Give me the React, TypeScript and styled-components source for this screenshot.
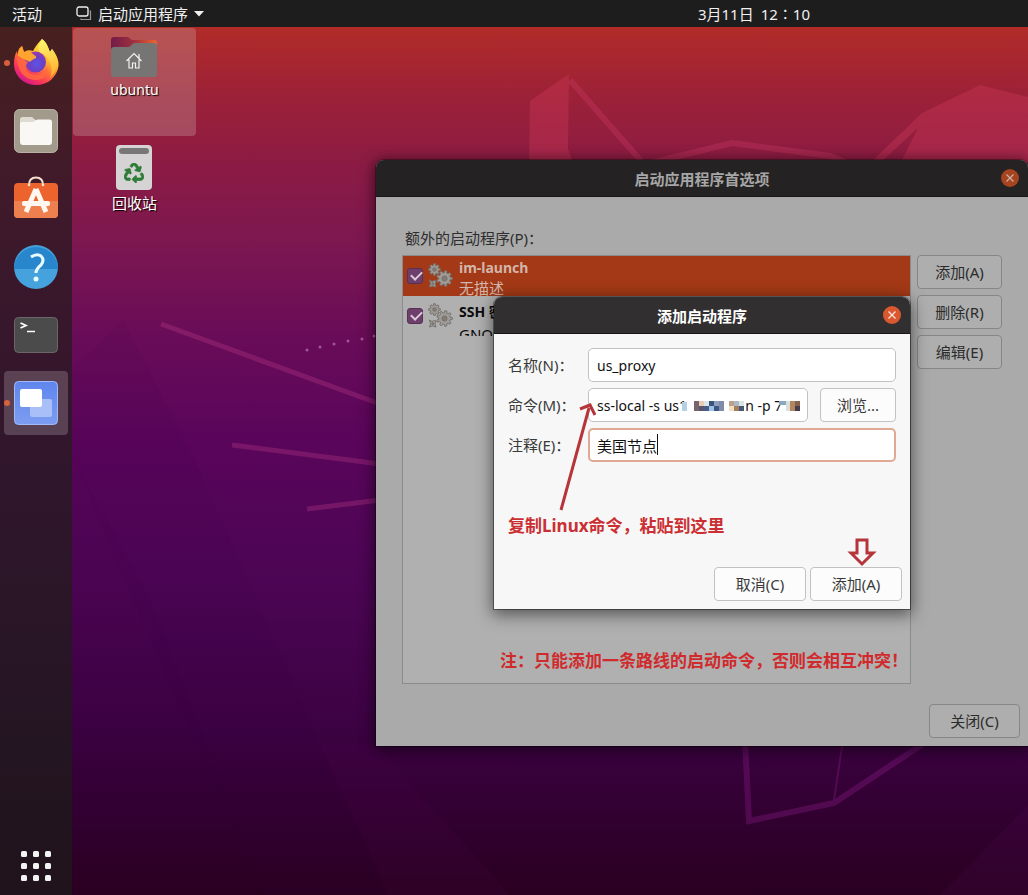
import React from 'react';
import styled, { createGlobalStyle, css } from 'styled-components';
import { FaRecycle } from 'react-icons/fa';

const Global = createGlobalStyle`
  * { box-sizing: border-box; }
  html, body { margin: 0; }
  body, button, input {
    font-family: "Noto Sans", "Noto Sans CJK SC", sans-serif;
    font-size: 15px;
    line-height: 20px;
  }
  h1, h2, p { margin: 0; }
  svg { display: block; }
`;

const Screen = styled.div`
  min-height: 100vh;
  display: grid;
  grid-template-rows: 27px 1fr;
  grid-template-columns: 72px 1fr;
  overflow: hidden;
`;

const TopBar = styled.header`
  grid-column: 1 / -1;
  display: flex;
  align-items: center;
  gap: 24px;
  padding: 0 12px;
  background: #1d1d1d;
  color: #f0f0f0;
  position: relative;
`;

const BarButton = styled.button`
  display: flex;
  align-items: center;
  gap: 6px;
  padding: 0;
  border: 0;
  background: none;
  color: inherit;
`;

const AppMenu = styled(BarButton)`
  margin-left: 10px;
`;

const Clock = styled(BarButton)`
  margin-left: auto;
  margin-right: 206px;
  gap: 7px;
`;

const Dock = styled.nav`
  display: flex;
  flex-direction: column;
  align-items: center;
  gap: 4px;
  padding: 4px 4px 14px;
  background: linear-gradient(#47201f 0, #411a2a 150px, #37172c 300px, #30162c 450px, #241522 720px, #20131b 100%);
`;

const DockItem = styled.button<{ $active?: boolean }>`
  position: relative;
  width: 64px;
  height: 64px;
  display: grid;
  place-items: center;
  padding: 0;
  border: 0;
  border-radius: 4px;
  background: ${p => (p.$active ? 'rgba(255,255,255,0.19)' : 'transparent')};
`;

const RunningDot = styled.span`
  position: absolute;
  left: 0;
  top: 29px;
  width: 6px;
  height: 6px;
  border-radius: 50%;
  background: #d8603c;
`;

const AppsButton = styled.button`
  margin-top: auto;
  padding: 0;
  border: 0;
  background: none;
`;

const Desktop = styled.main`
  position: relative;
  overflow: hidden;
  padding: 1px;
  background: linear-gradient(#b12b28 0, #9c2138 70px, #8b1b44 140px, #7c1750 215px, #690c58 310px, #5a055b 410px, #4b0553 560px, #3c0242 700px, #30002e 800px, #2a0021 100%);
`;

const Wallpaper = styled.svg`
  position: absolute;
  left: 0;
  top: 0;
  width: 956px;
  height: 868px;
`;

const IconColumn = styled.div`
  position: relative;
  width: 123px;
  display: flex;
  flex-direction: column;
  gap: 1px;
`;

const DesktopIcon = styled.button<{ $selected?: boolean }>`
  height: 108px;
  display: flex;
  flex-direction: column;
  align-items: center;
  gap: 2px;
  padding: 8px 0 0;
  border: 0;
  border-radius: 4px;
  background: ${p => (p.$selected ? 'rgba(200,160,160,0.34)' : 'transparent')};
  color: #fff;
  text-shadow: 1px 1px 1px #000;
`;

const LatinName = styled.span`
  font-size: 14px;
`;

const windowFrame = css`
  position: absolute;
  display: flex;
  flex-direction: column;
  border-radius: 8px 8px 0 0;
`;

const PrefsWindow = styled.section`
  ${windowFrame}
  left: 304px;
  right: 0;
  top: 133px;
  background: #aaaaaa;
  color: #2e2e2e;
  box-shadow: 0 2px 14px 2px rgba(0, 0, 0, 0.55), 0 0 0 1px rgba(0, 0, 0, 0.3);
`;

const AddDialog = styled.section`
  ${windowFrame}
  left: 118px;
  width: 416px;
  top: 137px;
  background: #f7f7f7;
  color: #3a3a3a;
  box-shadow: 0 4px 16px 2px rgba(0, 0, 0, 0.5), 0 0 0 1px rgba(0, 0, 0, 0.4);
`;

const TitleBar = styled.header<{ $dim?: boolean }>`
  position: relative;
  height: 37px;
  display: grid;
  place-items: center;
  padding-top: 2px;
  border-radius: 8px 8px 0 0;
  border-bottom: 1px solid #181616;
  background: ${p => (p.$dim ? '#242222' : '#322f30')};
  color: ${p => (p.$dim ? '#a6a6a6' : '#ffffff')};
`;

const WindowTitle = styled.h1`
  font-size: 15px;
  line-height: 20px;
  font-weight: 700;
`;

const CloseCircle = styled.button<{ $dim?: boolean }>`
  position: absolute;
  right: 9px;
  top: 9px;
  width: 18px;
  height: 18px;
  display: grid;
  place-items: center;
  padding: 0;
  border: 0;
  border-radius: 50%;
  background: ${p => (p.$dim ? '#a5441f' : '#d9582f')};
  color: ${p => (p.$dim ? '#c9b0a6' : '#ffe6dc')};
`;

const PrefsBody = styled.div`
  display: flex;
  flex-direction: column;
  padding: 31px 26px 0;
  gap: 7px;
`;

const ListLabel = styled.h2`
  padding-left: 3px;
  font-size: 15px;
  line-height: 20px;
  font-weight: 400;
`;

const ListArea = styled.div`
  display: flex;
  gap: 6px;
  min-height: 429px;
`;

const ProgramList = styled.ul`
  position: relative;
  flex: 1;
  margin: 0;
  padding: 0;
  list-style: none;
  border: 1px solid #8b8b8b;
  background: #b0b0b0;
`;

const ProgramRow = styled.li<{ $selected?: boolean }>`
  height: 40px;
  overflow: ${p => (p.$selected ? 'visible' : 'hidden')};
  display: flex;
  gap: 5px;
  padding-left: 4px;
  background: ${p => (p.$selected ? '#a33916' : 'transparent')};
  color: ${p => (p.$selected ? '#d3b5aa' : '#0b0b0b')};
`;

const RowCheck = styled.input`
  appearance: none;
  position: relative;
  width: 16px;
  height: 16px;
  margin: 12px 0 0;
  border: 1px solid #573055;
  border-radius: 3px;
  background: #6f3f6c;

  &::after {
    content: '';
    position: absolute;
    left: 3px;
    top: 2px;
    width: 9px;
    height: 5px;
    border: solid #dccbda;
    border-width: 0 0 2px 2px;
    transform: rotate(-45deg);
  }
`;

const RowIcon = styled.svg`
  width: 26px;
  height: 26px;
  margin-top: 7px;
  flex: none;
`;

const RowText = styled.label<{ $loose?: boolean }>`
  display: flex;
  flex-direction: column;
  padding-top: ${p => (p.$loose ? 5 : 2)}px;
  line-height: ${p => (p.$loose ? 22 : 20)}px;

  strong {
    font-size: 14px;
  }
`;

const SideButtons = styled.div`
  display: flex;
  flex-direction: column;
  gap: 6px;
  width: 85px;
`;

const Button = styled.button<{ $dim?: boolean; $width?: number }>`
  height: 34px;
  ${p => p.$width && css`width: ${p.$width}px;`}
  padding: 0;
  border: 1px solid ${p => (p.$dim ? '#868686' : '#c2c2c2')};
  border-radius: 4px;
  background: ${p => (p.$dim ? '#aeaeae' : '#fcfcfc')};
  color: ${p => (p.$dim ? '#2b2b2b' : '#3a3a3a')};
`;

const PrefsFooter = styled.footer`
  display: flex;
  justify-content: flex-end;
  padding: 20px 8px 8px;
`;

const DialogForm = styled.form`
  display: flex;
  flex-direction: column;
  padding: 14px 8px 8px 14px;
`;

const Fields = styled.div`
  display: grid;
  grid-template-columns: 80px 1fr;
  gap: 6px 0;
  align-items: center;
  padding-right: 6px;
`;

const FieldRow = styled.div`
  position: relative;
  display: flex;
  gap: 12px;
`;

const TextInput = styled.input<{ $focused?: boolean; $latin?: boolean }>`
  flex: 1;
  min-width: 0;
  height: 34px;
  padding: 0 ${p => (p.$focused ? 7 : 8)}px;
  border: ${p => (p.$focused ? '2px solid #e0a993' : '1px solid #c2c2c2')};
  border-radius: 5px;
  background: #fff;
  color: #111;
  outline: none;
  font-size: ${p => (p.$latin ? 14 : 15)}px;
`;

const Caret = styled.span`
  position: absolute;
  left: 69px;
  top: 6px;
  width: 1px;
  height: 21px;
  background: #111;
`;

const Mosaic = styled.svg`
  position: absolute;
  left: 94px;
  top: 10px;
`;

const HintText = styled.p`
  margin: 54px 0 31px;
  color: #cb2f33;
  font-size: 17px;
  font-weight: 700;
`;

const WarningText = styled.p`
  position: absolute;
  left: 97px;
  bottom: 12px;
  color: #d12a2c;
  font-size: 17px;
  font-weight: 700;
  white-space: nowrap;
`;

const DialogActions = styled.div`
  display: flex;
  justify-content: flex-end;
  gap: 4px;
`;

const Arrows = styled.svg`
  position: absolute;
  left: 0;
  top: 0;
  pointer-events: none;
`;

function gear(cx: number, cy: number, teeth: number, outer: number, inner: number) {
  const points: string[] = [];
  const step = (Math.PI * 2) / teeth;
  for (let i = 0; i < teeth; i++) {
    const a = i * step;
    [[-0.3, inner], [-0.2, outer], [0.2, outer], [0.3, inner]].forEach(([o, r]) => {
      points.push(`${(cx + Math.cos(a + o * step) * r).toFixed(2)},${(cy + Math.sin(a + o * step) * r).toFixed(2)}`);
    });
  }
  return points.join(' ');
}

const Gears = () => (
  <RowIcon viewBox="0 0 26 26" fill="#9f9b97" stroke="#77736f" strokeWidth="1">
    <polygon points={gear(6.5, 6.5, 8, 5.8, 4.3)} />
    <circle cx="6.5" cy="6.5" r="1.8" fill="#827a75" />
    <polygon points={gear(16.5, 15.5, 9, 7.8, 5.8)} />
    <circle cx="16.5" cy="15.5" r="2.6" fill="#827a75" />
    <polygon points="1.5,17 4,18.500 6.500,17.500 8,18 7,21 8,24 4.500,23 1.500,24 2.500,20.500" />
    <circle cx="4.7" cy="20.7" r="1" fill="#827a75" />
  </RowIcon>
);

const CloseMark = () => (
  <svg width="8" height="8" viewBox="0 0 8 8" stroke="currentColor" strokeWidth="1.3">
    <path d="M0.5 0.5 7.5 7.5M7.5 0.5 0.5 7.5" />
  </svg>
);

const FirefoxIcon = () => (
  <svg width="46" height="50" viewBox="0 0 46 50">
    <defs>
      <linearGradient id="ffBody" x1="0.8" y1="0.1" x2="0.25" y2="0.95">
        <stop offset="0" stopColor="#fff04a" />
        <stop offset="0.3" stopColor="#ffc22e" />
        <stop offset="0.55" stopColor="#ff7139" />
        <stop offset="0.8" stopColor="#fb3459" />
        <stop offset="1" stopColor="#d2188c" />
      </linearGradient>
      <radialGradient id="ffGlobe" cx="0.55" cy="0.6" r="0.6">
        <stop offset="0" stopColor="#5b55e8" />
        <stop offset="0.6" stopColor="#6e3fc4" />
        <stop offset="1" stopColor="#a03aa8" />
      </radialGradient>
      <linearGradient id="ffFlame" x1="0.6" y1="0" x2="0.8" y2="1">
        <stop offset="0" stopColor="#fff36a" />
        <stop offset="1" stopColor="#ffab2c" />
      </linearGradient>
    </defs>
    <path fill="url(#ffBody)" d="M29 1C34 5 35 9 37 14L39 11C44 17 46 23 45.500 28C44 39 35 47 23 47C10 47 1 37 1 26C1 20 2 16 4 13L4.500 17L6 11L9 8L11 14C14 12 17 12 20 13C22 9 25 5 29 1Z" />
    <circle cx="22.500" cy="24" r="10.500" fill="url(#ffGlobe)" />
    <path fill="url(#ffFlame)" d="M29 1C34 5 35 9 37 14L39 11C46 20 46 32 37 40C41 31 38 19 28 15C25 13 24 9 29 1Z" />
    <path fill="#ffa52f" d="M4.500 17L6 11L9 8L11 14C14 13 18 13 20 16C22 18 24 18 23 20C21 21 18 22 17 24C14 22 9 21 4.500 17Z" />
    <path fill="#ff6840" d="M4 17C8 23 12 22 15 24C10 30 14 36 23 37C29 37 33 34 34 29C36 37 30 43 21 42C11 41 4 33 4 17Z" opacity="0.85" />
  </svg>
);

const FilesIcon = () => (
  <svg width="44" height="44" viewBox="0 0 44 44">
    <rect x="0.500" y="0.500" width="43" height="43" rx="5" fill="#a29b8c" stroke="#b8b2a4" />
    <path d="M6 12V10.500Q6 8 8.500 8H18L22 11.500H35V16H6Z" fill="#dedbd3" />
    <path d="M6 14.500Q6 13 8 13H18Q20 13 21.500 11.500Q22.500 10.500 24 10.500H35.500Q38 10.500 38 13V33Q38 36 35 36H9Q6 36 6 33Z" fill="#f9f8f5" />
  </svg>
);

const SoftwareIcon = () => (
  <svg width="44" height="46" viewBox="0 0 44 46">
    <rect y="7" width="44" height="35" rx="4" fill="#ec632d" />
    <path d="M0 25H44V38Q44 42 40 42H4Q0 42 0 38Z" fill="#ee7f4f" />
    <path d="M22 13 12 36M22 13 32 36" stroke="#fff7f0" strokeWidth="5" />
    <rect x="8" y="25" width="28" height="5" rx="2" fill="#fff7f0" />
    <path d="M15 9Q15 1.500 22 1.500T29 9" fill="none" stroke="#f5dfcd" strokeWidth="2" />
    <circle cx="15" cy="9" r="1.300" fill="#f5dfcd" />
    <circle cx="29" cy="9" r="1.300" fill="#f5dfcd" />
  </svg>
);

const HelpIcon = () => (
  <svg width="44" height="44" viewBox="0 0 44 44">
    <circle cx="22" cy="22" r="22" fill="#45a2dc" />
    <path d="M0 24A22 22 0 0 1 44 24Z" fill="#2886cc" />
    <path d="M17 12Q23 8 27 11Q31 15 27 20Q22 24 22 28" fill="none" stroke="#e9fcff" strokeWidth="3" />
    <circle cx="22" cy="34" r="2.500" fill="#e9fcff" />
  </svg>
);

const TerminalIcon = () => (
  <svg width="44" height="36" viewBox="0 0 44 36">
    <rect x="0.500" y="0.500" width="43" height="35" rx="4" fill="#4b4b4b" stroke="#6c6666" />
    <path d="M6.500 6 12 8.500 6.500 11M13 14.500H21" fill="none" stroke="#fff" strokeWidth="1.700" />
  </svg>
);

const StartupIcon = () => (
  <svg width="44" height="44" viewBox="0 0 44 44">
    <defs>
      <linearGradient id="suBg" x1="0" y1="0" x2="0" y2="1">
        <stop offset="0" stopColor="#5f86ee" />
        <stop offset="1" stopColor="#7d9df0" />
      </linearGradient>
    </defs>
    <rect x="0.500" y="0.500" width="43" height="43" rx="4" fill="url(#suBg)" stroke="#a3b9f6" />
    <rect x="16" y="18" width="22" height="18" rx="2" fill="#a9bff8" />
    <rect x="6" y="8" width="22" height="18" rx="2" fill="#fff" />
  </svg>
);

const HomeFolderIcon = () => (
  <svg width="47" height="42" viewBox="0 0 47 42">
    <defs>
      <linearGradient id="tab" x1="0" y1="0" x2="1" y2="0">
        <stop offset="0" stopColor="#711c48" />
        <stop offset="0.5" stopColor="#a02f3e" />
        <stop offset="1" stopColor="#f0652f" />
      </linearGradient>
    </defs>
    <path d="M0 16V4Q0 1 3 1H17L21 4H43Q46 4 46 7V16Z" fill="url(#tab)" />
    <path d="M0 14Q0 11 3 11H17Q19 11 20.500 9Q21.500 7 24 7H43Q46 7 46 10V38Q46 41 43 41H3Q0 41 0 38Z" fill="#777474" />
    <path d="M15.500 25 23 17.500 30.500 25M18 23.500V32H21.500V27H24.500V32H28V23.500M28 22V18" fill="none" stroke="#f2f2f2" strokeWidth="1.200" />
  </svg>
);

const TrashIcon = () => (
  <svg width="37" height="46" viewBox="0 0 37 46">
    <rect width="36" height="45" rx="4" fill="#d5d3d3" />
    <rect x="3" y="3" width="30" height="6" rx="3" fill="#777" />
    <FaRecycle x="8" y="18" size={20} color="#2e7c36" stroke="#2e7c36" strokeWidth={18} />
  </svg>
);

const mosaicCells: [number, number, number, number, string][] = [
  [0, 1, 5, 9, '#b4d0e3'],
  [12, 0, 5, 10, '#78646a'], [17, 0, 5, 5, '#e6cdb8'], [17, 5, 5, 5, '#55596e'],
  [22, 5, 5, 5, '#475d83'], [22, 0, 5, 5, '#dde6ea'], [27, 0, 5, 5, '#37567c'], [27, 5, 5, 5, '#9cc3ea'],
  [32, 0, 5, 5, '#8e9ebc'], [32, 5, 5, 5, '#3c5580'], [37, 0, 5, 10, '#7f8ba9'],
  [47, 0, 5, 5, '#bd9f8b'], [47, 5, 5, 5, '#f3dfc6'], [52, 0, 5, 5, '#abb9c6'], [52, 5, 5, 5, '#a77c58'],
  [57, 0, 5, 5, '#dde4e5'], [57, 5, 5, 5, '#4a5877'],
  [97, 0, 7, 4, '#8aa9bf'], [104, 0, 4, 10, '#d9dfdc'], [108, 0, 5, 10, '#b2875f'], [113, 0, 5, 5, '#83624e'], [113, 5, 5, 5, '#463c4c'],
];

export default function App() {
  return (
    <>
      <Global />
      <Screen>
        <TopBar>
          <BarButton>活动</BarButton>
          <AppMenu>
            <svg width="16" height="16" viewBox="0 0 16 16" fill="none">
              <path d="M5 12.500V13.500H14.500V5H13.500" stroke="#999" strokeWidth="1.200" />
              <rect x="1" y="1" width="11" height="9" rx="2" stroke="#f0f0f0" strokeWidth="1.300" />
            </svg>
            启动应用程序
            <svg width="10" height="6" viewBox="0 0 10 6" fill="#f0f0f0"><path d="M0 0H10L5 5.500Z" /></svg>
          </AppMenu>
          <Clock><span>3月11日</span><span>12∶10</span></Clock>
        </TopBar>

        <Dock aria-label="Dock">
          <DockItem aria-label="Firefox"><RunningDot /><FirefoxIcon /></DockItem>
          <DockItem aria-label="文件"><FilesIcon /></DockItem>
          <DockItem aria-label="软件"><SoftwareIcon /></DockItem>
          <DockItem aria-label="帮助"><HelpIcon /></DockItem>
          <DockItem aria-label="终端"><TerminalIcon /></DockItem>
          <DockItem aria-label="启动应用程序" $active><RunningDot /><StartupIcon /></DockItem>
          <AppsButton aria-label="显示应用程序">
            <svg width="30" height="30" viewBox="0 0 30 30" fill="#f3f3f3">
              {[0, 12, 24].map(y => [0, 12, 24].map(x => <rect key={`${x}-${y}`} x={x} y={y} width="6" height="6" rx="1.500" />))}
            </svg>
          </AppsButton>
        </Dock>

        <Desktop>
          <Wallpaper viewBox="72 27 956 868" aria-hidden="true">
            <polygon points="72,370 123,320 195,460 320,745 390,895 265,895 150,640 72,455" fill="#30003c" opacity="0.06" />
            <polygon points="72,455 150,600 265,895 72,895" fill="#30003c" opacity="0.04" />
            <polygon points="320,745 376,745 510,895 388,895" fill="#70107a" opacity="0.06" />
            <polygon points="1028,805 1028,895 940,895" fill="#70107a" opacity="0.1" />
            <g fill="#d13a58" opacity="0.36">
              <polygon points="530,101 569,74 568,149 573,162 529,162" />
              <polygon points="922,113 980,85 1028,97 1028,162 901,162 918,128 881,162 871,162" />
            </g>
            <g fill="none" stroke="#d13a68" opacity="0.32" strokeWidth="6">
              <path d="M570 80 642 162M650 163 732 143 830 156 850 164" />
            </g>
            <g fill="none" stroke="#c4408a" opacity="0.3" strokeWidth="5">
              <path d="M161 324 380 404M232 445 380 464M307 509 380 500" />
            </g>
            <g fill="none" stroke="#8a1a86" opacity="0.36" strokeWidth="6">
              <path d="M745 740 749 821 834 803 926 742" />
              <path d="M843 740 834 800" strokeWidth="2" />
            </g>
            <g fill="#b878b0" opacity="0.7">
              {[[307, 350], [320, 347], [334, 344], [348, 341], [362, 339], [374, 336]].map(([x, y]) => (
                <circle key={x} cx={x} cy={y} r="1.500" />
              ))}
            </g>
          </Wallpaper>

          <IconColumn>
            <DesktopIcon $selected><HomeFolderIcon /><LatinName>ubuntu</LatinName></DesktopIcon>
            <DesktopIcon><TrashIcon /><span>回收站</span></DesktopIcon>
          </IconColumn>

          <PrefsWindow aria-label="启动应用程序首选项">
            <TitleBar $dim>
              <WindowTitle>启动应用程序首选项</WindowTitle>
              <CloseCircle $dim aria-label="关闭"><CloseMark /></CloseCircle>
            </TitleBar>
            <PrefsBody>
              <ListLabel>额外的启动程序(P)：</ListLabel>
              <ListArea>
                <ProgramList>
                  <ProgramRow $selected>
                    <RowCheck type="checkbox" id="p1" defaultChecked />
                    <Gears />
                    <RowText htmlFor="p1"><strong>im-launch</strong><span>无描述</span></RowText>
                  </ProgramRow>
                  <ProgramRow>
                    <RowCheck type="checkbox" id="p2" defaultChecked />
                    <Gears />
                    <RowText htmlFor="p2" $loose><strong>SSH 密钥代理</strong><span>GNOME 密钥环：SSH 代理</span></RowText>
                  </ProgramRow>
                  <WarningText>注：只能添加一条路线的启动命令，否则会相互冲突！</WarningText>
                </ProgramList>
                <SideButtons>
                  <Button $dim>添加(A)</Button>
                  <Button $dim>删除(R)</Button>
                  <Button $dim>编辑(E)</Button>
                </SideButtons>
              </ListArea>
            </PrefsBody>
            <PrefsFooter><Button $dim $width={91}>关闭(C)</Button></PrefsFooter>

            <AddDialog role="dialog" aria-label="添加启动程序">
              <TitleBar>
                <WindowTitle>添加启动程序</WindowTitle>
                <CloseCircle aria-label="关闭"><CloseMark /></CloseCircle>
              </TitleBar>
              <DialogForm onSubmit={e => e.preventDefault()}>
                <Fields>
                  <label htmlFor="name">名称(N)：</label>
                  <FieldRow><TextInput id="name" $latin defaultValue="us_proxy" /></FieldRow>
                  <label htmlFor="command">命令(M)：</label>
                  <FieldRow>
                    <TextInput id="command" $latin defaultValue={'ss-local -s us1                n -p 7'} />
                    <Mosaic width="120" height="16" viewBox="0 -3 120 16" aria-hidden="true">
                      {mosaicCells.map(([x, y, w, h, c], i) => <rect key={i} x={x} y={y} width={w} height={h} fill={c} />)}
                    </Mosaic>
                    <Button type="button" $width={76}>浏览...</Button>
                  </FieldRow>
                  <label htmlFor="comment">注释(E)：</label>
                  <FieldRow>
                    <TextInput id="comment" $focused defaultValue="美国节点" />
                    <Caret />
                  </FieldRow>
                </Fields>
                <HintText>复制Linux命令，粘贴到这里</HintText>
                <DialogActions>
                  <Button type="button" $width={92}>取消(C)</Button>
                  <Button type="submit" $width={92}>添加(A)</Button>
                </DialogActions>
              </DialogForm>
              <Arrows width="416" height="312" viewBox="494 297 416 312" fill="none" stroke="#b5353a" strokeWidth="3" aria-hidden="true">
                <path d="M561 510 589 408M580 409 590 405 595 415" />
                <path d="M857 540H867V553H873L862 564 851 553H857Z" />
              </Arrows>
            </AddDialog>
          </PrefsWindow>
        </Desktop>
      </Screen>
    </>
  );
}
